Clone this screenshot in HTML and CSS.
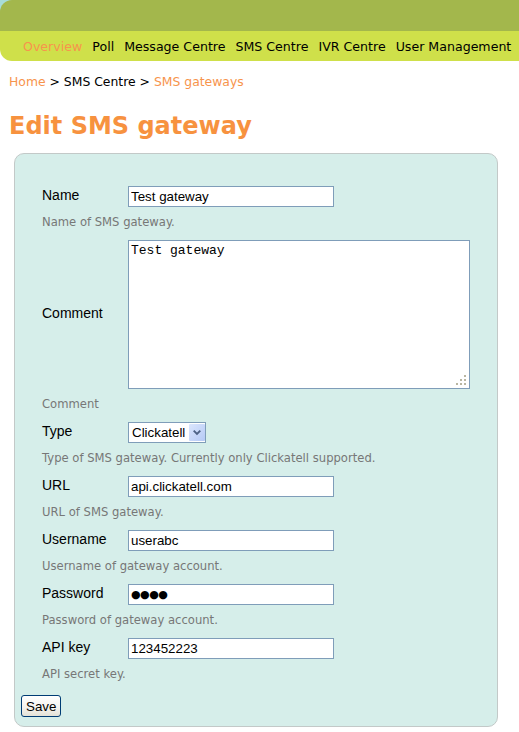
FILE: index.html
```html
<!DOCTYPE html>
<html>
<head>
<meta charset="utf-8">
<title>Edit SMS gateway</title>
<link rel="stylesheet" href="styles.css">
</head>
<body>
<div class="top">
  <div class="header">
    <div class="bar"></div>
    <ul class="nav">
      <li><a class="active" href="#">Overview</a></li>
      <li><a href="#">Poll</a></li>
      <li><a href="#">Message Centre</a></li>
      <li><a href="#">SMS Centre</a></li>
      <li><a href="#">IVR Centre</a></li>
      <li><a href="#">User Management</a></li>
    </ul>
  </div>
</div>
<div class="main">
  <div class="crumbs"><a href="#">Home</a> &gt; SMS Centre &gt; <a href="#">SMS gateways</a></div>
  <h1>Edit SMS gateway</h1>
  <form class="box">
    <div class="field"><label>Name</label><input class="text" type="text" value="Test gateway"></div>
    <p class="help">Name of SMS gateway.</p>
    <div class="field"><label>Comment</label>
      <div class="ta-wrap"><textarea class="ta">Test gateway</textarea>
        <svg class="grip" width="10" height="10" viewBox="0 0 10 10"><g fill="#b9b6a2"><rect x="8" y="0" width="2" height="2"/><rect x="4" y="4" width="2" height="2"/><rect x="8" y="4" width="2" height="2"/><rect x="0" y="8" width="2" height="2"/><rect x="4" y="8" width="2" height="2"/><rect x="8" y="8" width="2" height="2"/></g></svg>
      </div>
    </div>
    <p class="help">Comment</p>
    <div class="field"><label>Type</label>
      <div class="sel-wrap"><select class="sel"><option>Clickatell</option></select>
        <svg class="sel-btn" width="17" height="18" viewBox="0 0 17 18"><defs><linearGradient id="g" x1="0" y1="0" x2="1" y2="1"><stop offset="0" stop-color="#dbe6fd"/><stop offset="1" stop-color="#b5c9f6"/></linearGradient></defs><rect x="0" y="0" width="17" height="18" rx="1" fill="url(#g)"/><path d="M5 7 L8.5 10.5 L12 7" fill="none" stroke="#4d6185" stroke-width="2"/></svg>
      </div>
    </div>
    <p class="help">Type of SMS gateway. Currently only Clickatell supported.</p>
    <div class="field"><label>URL</label><input class="text" type="text" value="api.clickatell.com"></div>
    <p class="help">URL of SMS gateway.</p>
    <div class="field"><label>Username</label><input class="text" type="text" value="userabc"></div>
    <p class="help">Username of gateway account.</p>
    <div class="field"><label>Password</label><input class="text pw" type="text" value="●●●●" readonly></div>
    <p class="help">Password of gateway account.</p>
    <div class="field"><label>API key</label><input class="text" type="text" value="123452223"></div>
    <p class="help">API secret key.</p>
    <button class="save" type="button">Save</button>
  </form>
</div>
</body>
</html>
```
FILE: styles.css
```css
html, body {
  margin: 0;
  padding: 0;
  background: #fff;
}
body {
  font-family: "DejaVu Sans", Verdana, sans-serif;
  color: #000;
}
a { text-decoration: none; color: inherit; }

.top {
  background: linear-gradient(#a8dcd8 0, #a8dcd8 31px, #fff 31px);
}
.header {
  border-radius: 12px 0 0 12px;
  overflow: hidden;
}
.bar {
  height: 31px;
  background: #a3b74c;
}
.nav {
  list-style: none;
  margin: 0;
  padding: 0 0 0 23px;
  height: 30px;
  background: #cfe04a;
  display: flex;
  align-items: center;
  gap: 10px;
  font-size: 12.6px;
  white-space: nowrap;
}
.nav a { color: #000; }
.nav a.active { color: #f7944c; }

.main {
  padding: 0 9px;
}
.crumbs {
  font-size: 12.4px;
  margin-top: 13px;
  line-height: 16px;
}
.crumbs a { color: #f7944c; }

h1 {
  margin: 21px 0 0;
  font-size: 24px;
  line-height: 30px;
  font-weight: bold;
  color: #f7923f;
}

.box {
  margin: 12px 0 0 5px;
  width: 482px;
  border: 1px solid #c3c9c8;
  border-radius: 10px;
  background: #d6eeea;
  padding: 32px 0 9px 0;
}
.field {
  display: flex;
  align-items: center;
  padding-left: 27px;
}
.field label {
  width: 86px;
  margin-bottom: 3px;
  font-family: "Liberation Sans", Arial, sans-serif;
  font-size: 14px;
}
.text {
  box-sizing: border-box;
  width: 206px;
  height: 21px;
  margin: 0;
  padding: 1px 2px;
  border: 1px solid #7f9db9;
  background: #fff;
  font-family: "Liberation Sans", Arial, sans-serif;
  font-size: 13.33px;
  color: #000;
  outline: none;
}
.pw {
  font-family: "DejaVu Sans", sans-serif;
  font-size: 11px;
  letter-spacing: -0.5px;
}
.ta-wrap {
  position: relative;
  display: flex;
}
.ta {
  box-sizing: border-box;
  width: 342px;
  height: 149px;
  margin: 0;
  padding: 2px;
  border: 1px solid #7f9db9;
  resize: none;
  font-family: "Liberation Mono", "Courier New", monospace;
  font-size: 13px;
  line-height: 15px;
  outline: none;
}
.grip {
  position: absolute;
  right: 4px;
  bottom: 4px;
}
.sel-wrap {
  position: relative;
  display: flex;
}
.sel {
  -webkit-appearance: none;
  appearance: none;
  box-sizing: border-box;
  width: 78px;
  height: 21px;
  margin: 0;
  padding: 0 0 0 3px;
  border: 1px solid #7f9db9;
  border-radius: 0;
  background: #fff;
  font-family: "Liberation Sans", Arial, sans-serif;
  font-size: 13.33px;
  color: #000;
  outline: none;
}
.sel-btn {
  position: absolute;
  right: 1px;
  top: 1px;
  height: 19px;
  width: 16px;
}
.help {
  margin: 8px 0 11px 27px;
  font-size: 11.6px;
  line-height: 14px;
  color: #777;
}
.save {
  margin: 3px 0 0 6px;
  height: 22px;
  padding: 0 4px;
  border: 1px solid #003c74;
  border-radius: 3px;
  background: linear-gradient(#fff, #f4f3ee 60%, #e3e1d6);
  font-family: "Liberation Sans", Arial, sans-serif;
  font-size: 13.33px;
  color: #000;
}
```
